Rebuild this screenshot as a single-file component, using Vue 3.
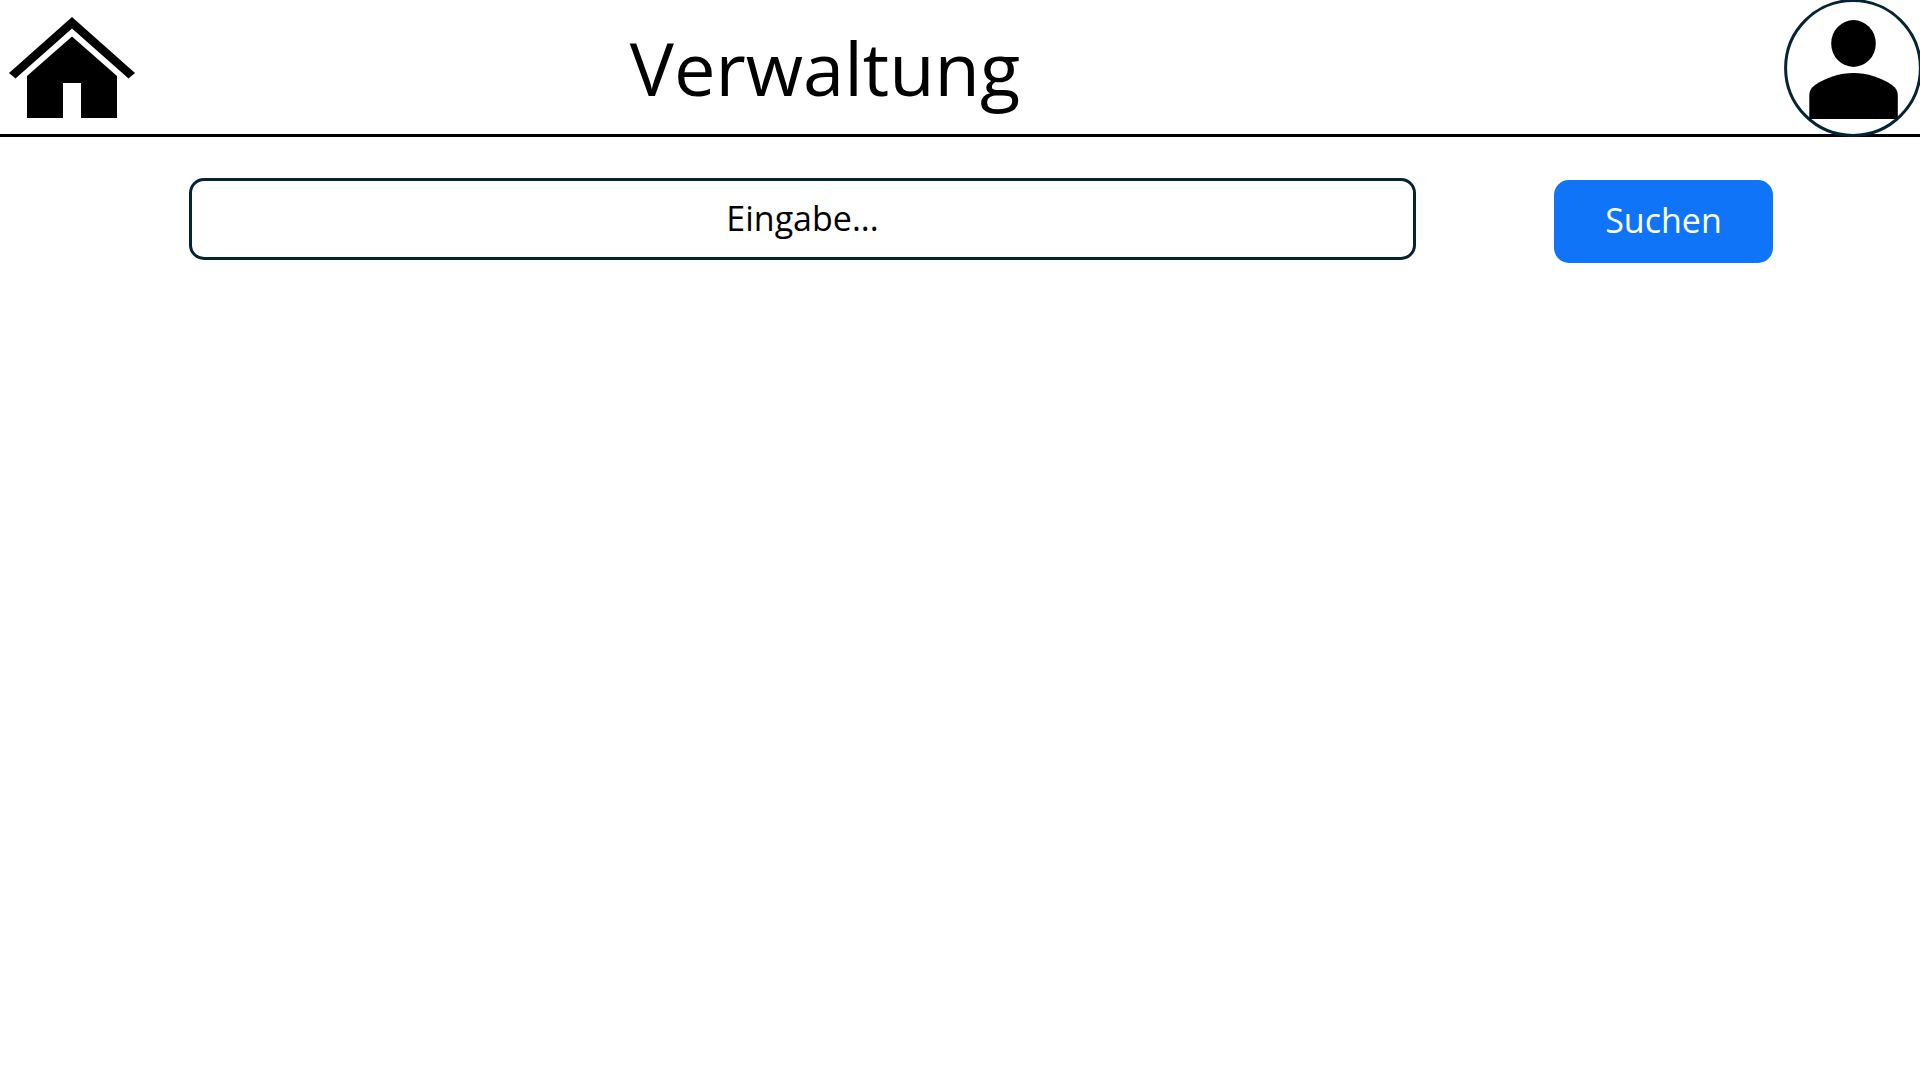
<script setup>
import { ref } from 'vue'

const query = ref('')
</script>

<template>
  <div class="page">
    <header class="header">
      <a class="home" href="#" aria-label="Startseite">
        <svg width="144" height="134" viewBox="0 0 144 134" aria-hidden="true">
          <path d="M72 17L135 73L128.5 78.5L72 28.5L15.5 78.5L9 73Z" />
          <path d="M72 36.5L117 76V118H81V83H63V118H27V76Z" />
        </svg>
      </a>
      <h1 class="title">Verwaltung</h1>
      <button class="profile" type="button" aria-label="Profil">
        <svg width="136" height="137" viewBox="0 0 136 137" aria-hidden="true">
          <circle class="ring" cx="69" cy="68" r="67.4" />
          <ellipse cx="69.5" cy="43.5" rx="22.3" ry="23.4" />
          <path d="M25.3 119V96C25.3 91 27 88 31 85C42 77.5 56 73 69.5 73C83 73 97 77.5 108 85C112 88 113.8 91 113.8 96V119Z" />
        </svg>
      </button>
    </header>
    <main>
      <form class="search" role="search" @submit.prevent>
        <input v-model="query" class="field" type="text" placeholder="Eingabe..." aria-label="Eingabe" />
        <button class="submit" type="submit">Suchen</button>
      </form>
    </main>
  </div>
</template>

<style>
body {
  margin: 0;
  background: #fff;
}
</style>

<style scoped>
.page {
  font-family: "Open Sans", "Noto Sans", sans-serif;
  color: #000;
}

.header {
  display: flex;
  align-items: flex-start;
  height: 134px;
  border-bottom: 3px solid #000;
}

.home,
.profile {
  flex: none;
  display: block;
}

.home svg,
.profile svg {
  display: block;
}

.profile {
  padding: 0;
  border: 0;
  background: none;
  color: inherit;
  cursor: pointer;
}

.ring {
  fill: #fff;
  stroke: #042433;
  stroke-width: 3;
}

.title {
  flex: 1;
  margin: 0;
  padding-right: 278px;
  font-size: 74px;
  font-weight: 400;
  line-height: 136px;
  text-align: center;
}

.search {
  display: flex;
  align-items: flex-end;
  gap: 138px;
  padding: 41px 147px 0 189px;
}

.field {
  flex: 1;
  min-width: 0;
  box-sizing: border-box;
  height: 82px;
  margin: 0 0 3px;
  padding: 0 16px 2px;
  border: 3px solid #042433;
  border-radius: 15px;
  background: #fff;
  color: #000;
  font: inherit;
  font-size: 34px;
  text-align: center;
}

.field::placeholder {
  color: #000;
  opacity: 1;
}

.submit {
  flex: none;
  width: 219px;
  height: 83px;
  padding: 0 0 4px;
  border: 0;
  border-radius: 15px;
  background: #0f74f8;
  color: #fff;
  font: inherit;
  font-size: 34px;
  cursor: pointer;
}
</style>
